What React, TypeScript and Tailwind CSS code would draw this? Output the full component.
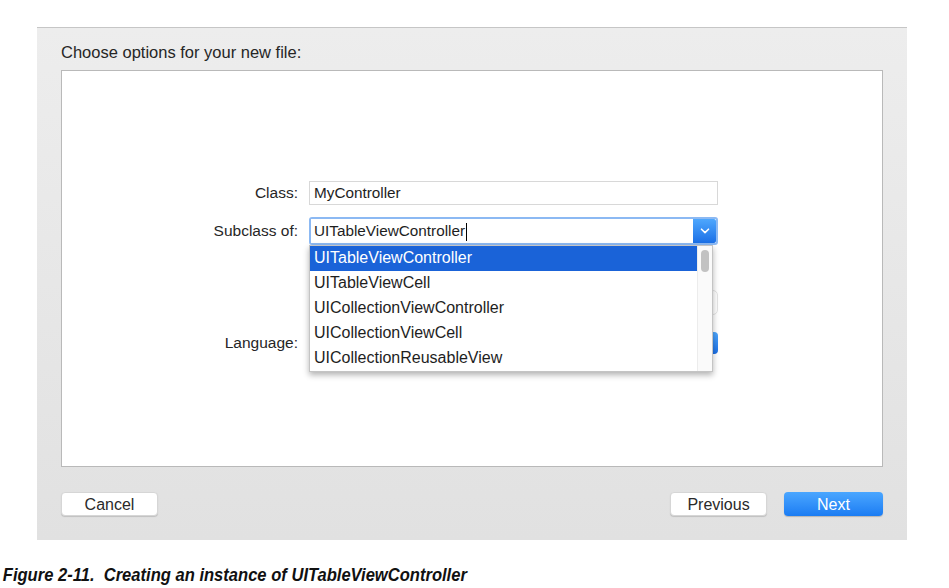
const sans = "font-['Helvetica_Neue','Liberation_Sans',Arial,sans-serif]";

const options = [
  "UITableViewController",
  "UITableViewCell",
  "UICollectionViewController",
  "UICollectionViewCell",
  "UICollectionReusableView",
];

function Chevron({ className = "" }: { className?: string }) {
  return (
    <svg className={className} viewBox="0 0 10 6" fill="none" stroke="currentColor" strokeWidth="1.6" strokeLinecap="round" strokeLinejoin="round">
      <path d="M1.5 1.2 L5 4.6 L8.5 1.2" />
    </svg>
  );
}

function Label({ children }: { children: string }) {
  return <div className="w-[247px] pr-[11px] text-right text-[15.5px] text-[#262626]">{children}</div>;
}

function DialogButton({ children, primary = false, width }: { children: string; primary?: boolean; width: string }) {
  return (
    <button
      className={`${width} h-[24px] rounded-[4px] pt-px text-[16px] leading-none ${
        primary
          ? "bg-gradient-to-b from-[#4aa6ff] to-[#1a7cf3] text-white shadow-[0_1px_1px_rgba(0,0,0,0.2)]"
          : "border border-[#d6d6d6] bg-white text-[#2a2a2a] shadow-[0_1px_1px_rgba(0,0,0,0.15)]"
      }`}
      type="button"
    >
      {children}
    </button>
  );
}

export default function App() {
  return (
    <div className={`${sans} h-[588px] w-[949px] bg-white`}>
      <div className="ml-[37px] flex h-[540px] w-[870px] flex-col pt-[27px]">
        <div className="flex h-[513px] flex-col border-t border-[#c6c6c6] bg-gradient-to-b from-[#ededed] to-[#e1e1e1] px-[24px]">
          <div className="pt-[15px] text-[16.5px] leading-[19px] text-[#262626]">Choose options for your new file:</div>
          <div className="relative mt-[8px] h-[397px] border border-[#b9b9b9] bg-white pt-[110px]">
            <div className="flex flex-col">
              <div className="flex h-[24px] items-center">
                <Label>Class:</Label>
                <div className="flex h-[24px] w-[409px] items-center border border-[#d8d8d8] bg-white px-[4px] text-[15.3px] text-[#1e1e1e]">
                  MyController
                </div>
              </div>

              <div className="mt-[12px] flex h-[28px] items-center">
                <Label>Subclass of:</Label>
                <div className="relative h-[28px] w-[409px] rounded-[3px] border-[2px] border-[#8cb9f3]">
                  <div className="flex h-full items-center bg-white pl-[3px] pt-px text-[15.3px] text-[#1e1e1e]">
                    UITableViewController
                    <span className="ml-px h-[18px] w-px bg-black" />
                  </div>
                  <div className="absolute right-0 top-0 flex h-[24px] w-[23px] items-center justify-center rounded-r-[2px] bg-gradient-to-b from-[#4ea7fd] to-[#1b6fe6]">
                    <Chevron className="h-[6px] w-[10px] text-white" />
                  </div>
                  <div className="absolute left-[-2px] top-[26px] z-10 h-[127px] w-[404px] border border-[#c4c4c4] bg-white shadow-[0_3px_6px_rgba(0,0,0,0.3)]">
                    <div className="flex h-full">
                      <div className="flex-1">
                        {options.map((o, i) => (
                          <div
                            key={o}
                            className={`flex h-[25px] items-center pb-[2px] pl-[4px] text-[16px] ${
                              i === 0 ? "h-[24px] bg-[#1a63d8] text-white" : "text-[#1e1e1e]"
                            }`}
                          >
                            {o}
                          </div>
                        ))}
                      </div>
                      <div className="w-[15px] border-l border-[#ececec] bg-[#fafafa] pt-[4px]">
                        <div className="ml-[3px] h-[22px] w-[8px] rounded-full bg-[#c2c2c2]" />
                      </div>
                    </div>
                  </div>
                </div>
              </div>

              <div className="mt-[45px] flex h-[25px] items-center">
                <div className="w-[247px]" />
                <div className="h-[25px] w-[409px] rounded-[5px] border border-[#e4e4e4] bg-white" />
              </div>

              <div className="mt-[17px] flex h-[22px] items-center">
                <Label>Language:</Label>
                <div className="relative h-[22px] w-[409px] rounded-[4px] border border-[#d8d8d8] bg-white">
                  <div className="absolute right-[-1px] top-[-1px] h-[22px] w-[18px] rounded-r-[4px] bg-gradient-to-b from-[#4ea7fd] to-[#1b6fe6]" />
                </div>
              </div>
            </div>
          </div>
          <div className="mt-[25px] flex items-center">
            <DialogButton width="w-[97px]">Cancel</DialogButton>
            <div className="flex-1" />
            <DialogButton width="w-[97px]">Previous</DialogButton>
            <div className="w-[17px]" />
            <DialogButton width="w-[99px]" primary>Next</DialogButton>
          </div>
        </div>
      </div>
      <div className="mt-[25px] origin-left scale-x-[0.92] pl-[3px] text-[18px] leading-[20px] text-[#111] italic font-['Liberation_Sans',Arial,sans-serif]">
        <span className="font-bold">Figure 2-11.</span>
        <span className="whitespace-pre">{"  "}</span>
        <span className="font-bold">Creating an instance of UITableViewController</span>
      </div>
    </div>
  );
}
